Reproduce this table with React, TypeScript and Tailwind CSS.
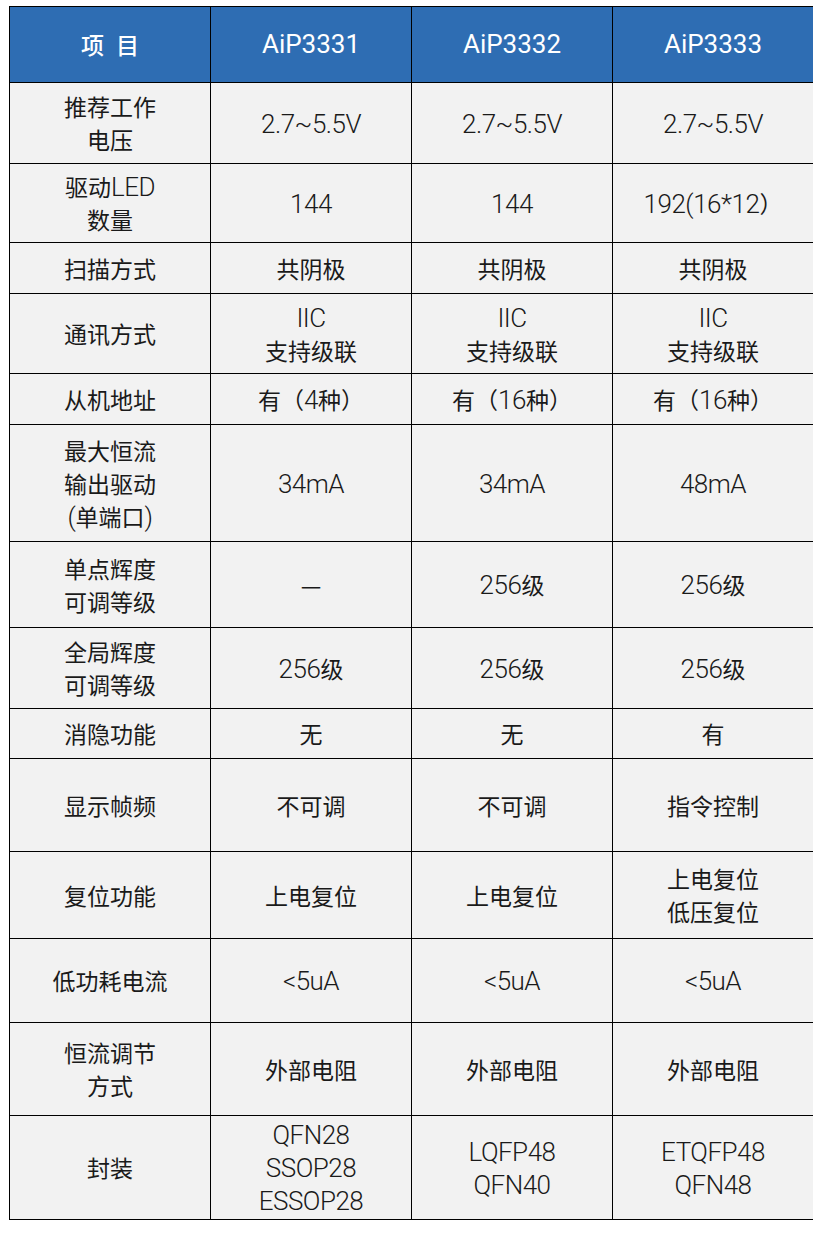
import React from 'react';

// 行高（像素），含底部边框
const ROW_HEIGHTS = 'grid-rows-[76px_81px_79px_51px_80px_51px_117px_86px_81px_50px_93px_87px_84px_93px_104px]';

const HEADERS = ['项 目', 'AiP3331', 'AiP3332', 'AiP3333'];

const ROWS: string[][][] = [
  [['推荐工作', '电压'], ['2.7~5.5V'], ['2.7~5.5V'], ['2.7~5.5V']],
  [['驱动LED', '数量'], ['144'], ['144'], ['192(16*12）']],
  [['扫描方式'], ['共阴极'], ['共阴极'], ['共阴极']],
  [['通讯方式'], ['IIC', '支持级联'], ['IIC', '支持级联'], ['IIC', '支持级联']],
  [['从机地址'], ['有（4种）'], ['有（16种）'], ['有（16种）']],
  [['最大恒流', '输出驱动', '(单端口)'], ['34mA'], ['34mA'], ['48mA']],
  [['单点辉度', '可调等级'], ['—'], ['256级'], ['256级']],
  [['全局辉度', '可调等级'], ['256级'], ['256级'], ['256级']],
  [['消隐功能'], ['无'], ['无'], ['有']],
  [['显示帧频'], ['不可调'], ['不可调'], ['指令控制']],
  [['复位功能'], ['上电复位'], ['上电复位'], ['上电复位', '低压复位']],
  [['低功耗电流'], ['<5uA'], ['<5uA'], ['<5uA']],
  [['恒流调节', '方式'], ['外部电阻'], ['外部电阻'], ['外部电阻']],
  [['封装'], ['QFN28', 'SSOP28', 'ESSOP28'], ['LQFP48', 'QFN40'], ['ETQFP48', 'QFN48']],
];

// 拉丁字符比中文显得更大更窄，单独套一层
function Mixed({ text }: { text: string }) {
  const parts = text.match(/[\x20-\x7e]+|[^\x20-\x7e]+/g) || [];
  return (
    <>
      {parts.map((p, i) =>
        /^[\x20-\x7e]+$/.test(p) && p.trim() ? (
          <span key={i} className="font-['Roboto'] font-light text-[26px] tracking-[-0.5px] leading-[33px]">{p}</span>
        ) : (
          <span key={i}>{p}</span>
        )
      )}
    </>
  );
}

function Cell({ lines, last }: { lines: string[]; last: boolean }) {
  return (
    <div className={`flex flex-col items-center justify-center bg-[#f2f2f2] border-b border-black ${last ? '' : 'border-r'} text-[23px] leading-[33px] text-[#1a1a1a]`}>
      {lines.map((l, i) => (
        <span key={i} className="whitespace-nowrap h-[33px]"><Mixed text={l} /></span>
      ))}
    </div>
  );
}

export default function App() {
  return (
    <div className="min-h-[1235px] bg-white pt-[6px] pl-[9px]" style={{ fontFamily: '"Noto Sans CJK SC", "Noto Sans", sans-serif' }}>
      <div className={`grid w-[804px] grid-cols-[201px_201px_201px_200px] ${ROW_HEIGHTS} border-l border-t border-black`}>
        {HEADERS.map((h, i) => (
          <div key={h} className={`flex items-center justify-center bg-[#2e6db3] border-b border-black ${i < 3 ? 'border-r' : ''} text-white`}>
            {i === 0 ? (
              <span className="flex gap-[12px] text-[23px] font-medium">
                {h.split(' ').map(ch => <span key={ch}>{ch}</span>)}
              </span>
            ) : (
              <span className="font-['Roboto'] text-[26px]">{h}</span>
            )}
          </div>
        ))}
        {ROWS.map((row, r) =>
          row.map((lines, c) => <Cell key={`${r}-${c}`} lines={lines} last={c === 3} />)
        )}
      </div>
    </div>
  );
}
